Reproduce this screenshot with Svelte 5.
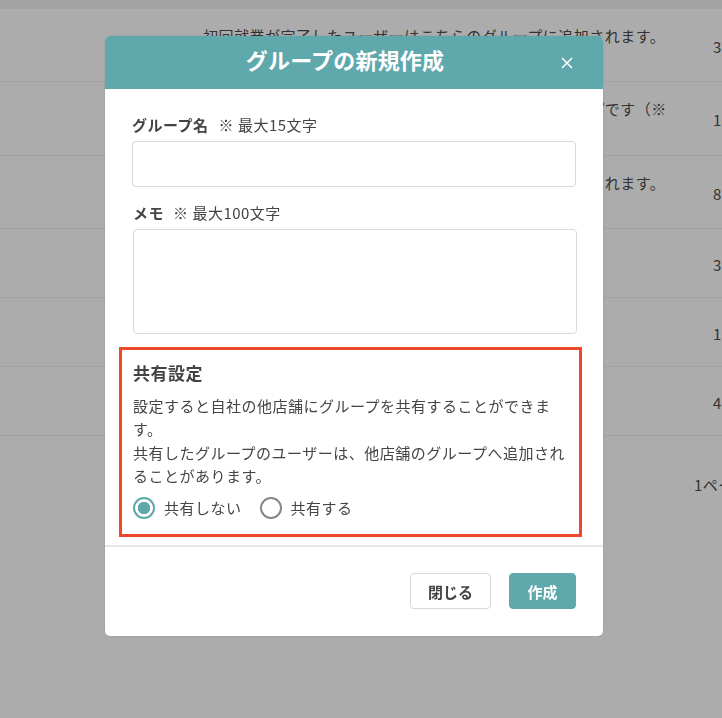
<script>
    let rows = [
        { text: '初回就業が完了したユーザーはこちらのグループに追加されます。', count: '34', height: 73 },
        { text: '特に一定の条件を満たしたユーザーが追加されるグループです（※ 就業回数により自動で振り分けられます）', count: '14', height: 74 },
        { text: '再度就業が完了したユーザーはこちらのグループに追加されます。', count: '82', height: 73 },
        { text: '', count: '3', height: 69 },
        { text: '', count: '17', height: 69 },
        { text: '', count: '45', height: 69 }
    ];

    let groupName = '';
    let memo = '';
    let share = 'no';
</script>

<div class="page">
    <div class="table-head"></div>
    {#each rows as row}
        <div class="row" style="height: {row.height}px">
            <p class="row-text">{row.text}</p>
            <span class="row-count">{row.count}</span>
        </div>
    {/each}
    <p class="pager">1ページ目</p>
</div>

<div class="overlay">
    <section class="modal">
        <header class="modal-header">
            <h2>グループの新規作成</h2>
            <button class="close" type="button" aria-label="閉じる">
                <svg width="12" height="12" viewBox="0 0 12 12">
                    <path d="M1 1 L11 11 M11 1 L1 11" stroke="#fff" stroke-width="1.5" fill="none" />
                </svg>
            </button>
        </header>

        <div class="modal-body">
            <label class="field">
                <span class="label"><b>グループ名</b><small>※ 最大15文字</small></span>
                <input type="text" bind:value={groupName} />
            </label>

            <label class="field memo">
                <span class="label"><b>メモ</b><small>※ 最大100文字</small></span>
                <textarea bind:value={memo}></textarea>
            </label>

            <div class="share">
                <h3>共有設定</h3>
                <p>設定すると自社の他店舗にグループを共有することができます。<br />共有したグループのユーザーは、他店舗のグループへ追加されることがあります。</p>
                <div class="radios">
                    <label><input type="radio" value="no" bind:group={share} />共有しない</label>
                    <label><input type="radio" value="yes" bind:group={share} />共有する</label>
                </div>
            </div>
        </div>

        <footer class="modal-footer">
            <button class="btn" type="button">閉じる</button>
            <button class="btn primary" type="button">作成</button>
        </footer>
    </section>
</div>

<style>
    :global(body) {
        margin: 0;
        background: #acacac;
        overflow: hidden;
        font-family: "Noto Sans CJK JP", "Noto Sans", sans-serif;
    }

    .page {
        height: 718px;
        overflow: hidden;
        color: #333;
        font-size: 15px;
        letter-spacing: 0.5px;
    }

    .table-head {
        height: 9px;
        background: #a3a3a3;
    }

    .row {
        display: grid;
        grid-template-columns: 470px 1fr;
        column-gap: 40px;
        box-sizing: border-box;
        padding-left: 203px;
        border-bottom: 1px solid #a1a1a1;
        width: 760px;
    }

    .row-text {
        margin: 15px 0 0;
        line-height: 24px;
    }

    .row-count {
        align-self: center;
        padding-top: 3px;
        line-height: 22px;
    }

    .pager {
        margin: 38px 0 0 694px;
        width: 100px;
        line-height: 22px;
    }

    .overlay {
        position: fixed;
        inset: 0;
    }

    .modal {
        width: 498px;
        height: 600px;
        margin: 36px 0 0 105px;
        display: flex;
        flex-direction: column;
        background: #fff;
        border-radius: 5px;
        overflow: hidden;
        color: #444;
        box-shadow: 0 0 2px rgba(0, 0, 0, 0.15);
    }

    .modal-header {
        height: 53px;
        flex: none;
        position: relative;
        display: flex;
        align-items: center;
        justify-content: center;
        background: #5fa8ac;
    }

    h2 {
        margin: 0 0 7px -18px;
        color: #fff;
        font-size: 22px;
        font-weight: 700;
        line-height: 1.4;
        letter-spacing: 0.2px;
    }

    .close {
        position: absolute;
        right: 30px;
        top: 21px;
        padding: 0;
        border: none;
        background: none;
        line-height: 0;
    }

    .modal-body {
        flex: 1;
        padding: 23px 27px 0 27px;
    }

    .field {
        display: block;
    }

    .label {
        display: flex;
        align-items: center;
        height: 24px;
        margin-bottom: 5px;
        font-size: 15px;
        letter-spacing: 0.5px;
    }

    .label b {
        font-weight: 700;
    }

    .label small {
        margin-left: 10px;
        font-size: 15px;
    }

    input[type="text"],
    textarea {
        display: block;
        box-sizing: border-box;
        width: 444px;
        border: 1px solid #d8d8d8;
        border-radius: 4px;
        background: #fff;
        margin: 0;
    }

    input[type="text"] {
        height: 46px;
    }

    .memo {
        margin: 13px 0 0 1px;
    }

    .memo small {
        margin-left: 9px;
    }

    textarea {
        height: 105px;
        resize: none;
    }

    .share {
        box-sizing: border-box;
        width: 463px;
        height: 190px;
        margin: 13px 0 0 -13px;
        padding: 11px 12px 0 11px;
        border: 3px solid #ee4a2a;
    }

    h3 {
        margin: 0;
        font-size: 17px;
        font-weight: 700;
        line-height: 24px;
        letter-spacing: 0.5px;
    }

    .share p {
        margin: 9px 0 0;
        font-size: 15px;
        line-height: 23.4px;
        letter-spacing: 0.5px;
    }

    .radios {
        display: flex;
        gap: 18px;
        margin-top: 9px;
    }

    .radios label {
        display: flex;
        align-items: center;
        font-size: 15px;
        letter-spacing: 0.5px;
        line-height: 22px;
    }

    input[type="radio"] {
        appearance: none;
        box-sizing: border-box;
        width: 22px;
        height: 22px;
        margin: 0 9px 0 0;
        border: 2px solid #888;
        border-radius: 50%;
        background: #fff;
    }

    input[type="radio"]:checked {
        border-color: #5fa8ac;
        background: radial-gradient(circle, #5fa8ac 0 6px, #fff 6.5px);
    }

    .modal-footer {
        flex: none;
        height: 91px;
        box-sizing: border-box;
        display: flex;
        justify-content: flex-end;
        align-items: flex-start;
        gap: 18px;
        padding: 26px 27px 0 0;
        border-top: 2px solid #e6e6e6;
    }

    .btn {
        height: 36px;
        width: 81px;
        padding: 0;
        border: 1px solid #d8d8d8;
        border-radius: 4px;
        background: #fff;
        color: #444;
        font-family: inherit;
        font-size: 15px;
        font-weight: 700;
    }

    .primary {
        width: 67px;
        border-color: #5fa8ac;
        background: #5fa8ac;
        color: #fff;
    }
</style>
